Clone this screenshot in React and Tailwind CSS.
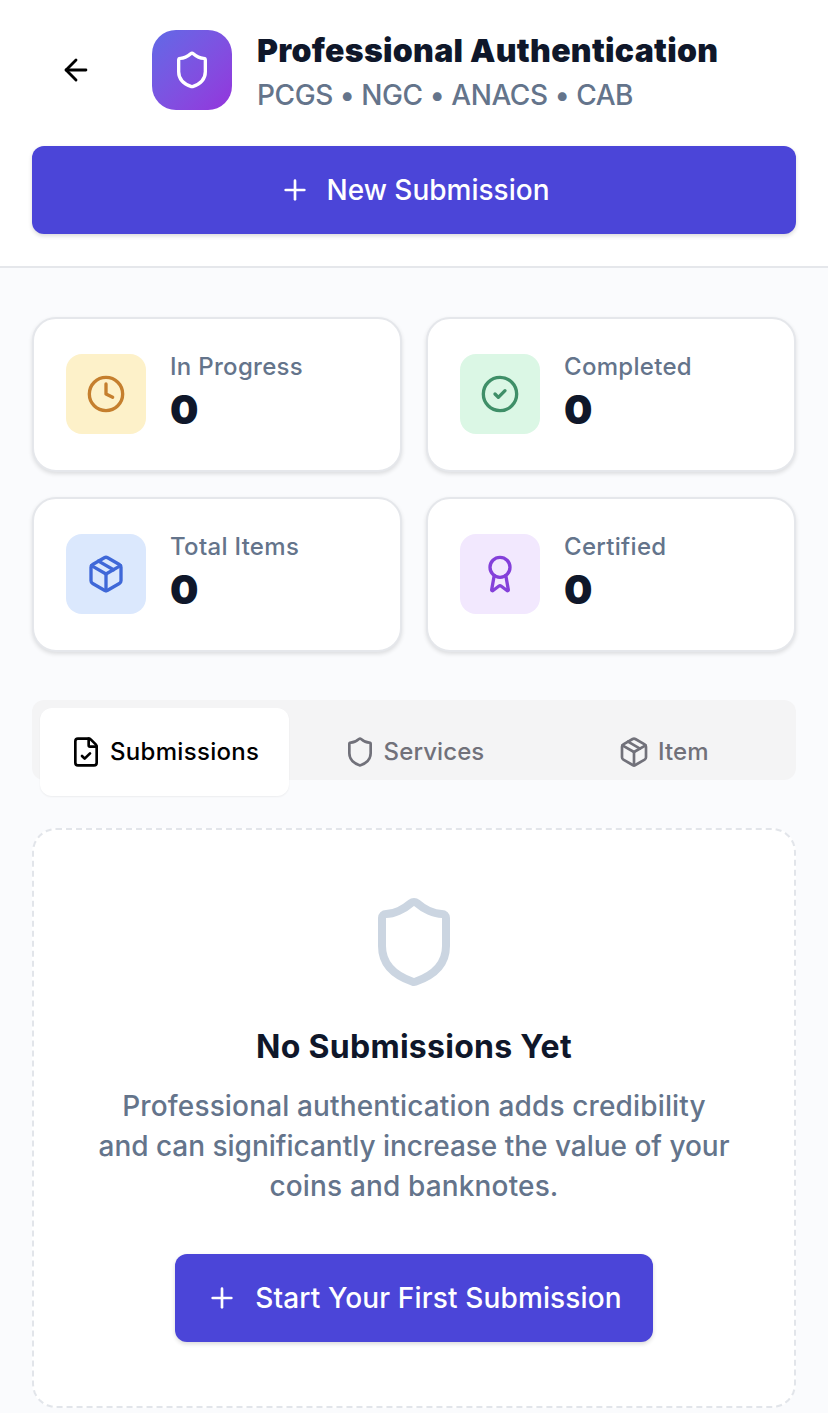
import { ArrowLeft, Shield, Plus, Clock, CircleCheck, Package, Award, FileCheck } from 'lucide-react';

const stats = [
	{ label: 'In Progress', Icon: Clock, box: 'bg-[#fdf1c9]', color: 'text-[#c57f2e]' },
	{ label: 'Completed', Icon: CircleCheck, box: 'bg-[#dbf7e5]', color: 'text-[#3f8f68]' },
	{ label: 'Total Items', Icon: Package, box: 'bg-[#dbe8fd]', color: 'text-[#3f68d8]' },
	{ label: 'Certified', Icon: Award, box: 'bg-[#f2e8fe]', color: 'text-[#8440da]' },
];

const StatCard = ({ label, Icon, box, color }) => (
	<div className="flex items-center gap-6 h-[155px] px-8 pb-[1px] bg-white border-2 border-[#e5e7eb] rounded-3xl shadow-[0_2px_4px_rgba(0,0,0,0.12)]">
		<div className={`flex items-center justify-center w-20 h-20 rounded-2xl ${box}`}>
			<Icon size={40} strokeWidth={2} className={color} />
		</div>
		<div className="mb-[6px]">
			<div className="text-2xl leading-8 font-medium tracking-[0.3px] text-[#64748b]">{label}</div>
			<div className="text-[40px] leading-[48px] mt-[3px] -mb-[2px] font-black text-[#0f172a]">0</div>
		</div>
	</div>
);

export default function App() {
	return (
		<div className="min-h-[1413px] bg-[#fafbfd] font-['Inter',sans-serif]">
			<header className="h-[268px] px-8 pt-[30px] bg-white border-b-2 border-[#e5e7eb]">
				<div className="flex items-center h-20">
					<button className="flex items-center justify-center w-20 h-20 ml-1 mr-9 text-black">
						<ArrowLeft size={34} strokeWidth={2} />
					</button>
					<div className="flex items-center justify-center w-20 h-20 rounded-3xl bg-gradient-to-br from-[#5f69e6] to-[#9333dc]">
						<Shield size={40} strokeWidth={2} className="text-white" />
					</div>
					<div className="ml-[25px] mt-[6px]">
						<div className="text-[32px] leading-10 font-black tracking-[0.3px] text-[#0f172a] whitespace-nowrap">Professional Authentication</div>
						<div className="text-[28px] leading-10 mt-[4px] font-medium tracking-[-0.43px] text-[#64748b] whitespace-nowrap">PCGS • NGC • ANACS • CAB</div>
					</div>
				</div>
				<button className="flex items-center justify-center gap-4 w-full h-[88px] mt-[36px] rounded-xl bg-[#4b45d8] text-white text-[28px] font-medium shadow-[0_2px_4px_rgba(0,0,0,0.15)]">
					<Plus size={32} strokeWidth={2} />
					New Submission
				</button>
			</header>

			<main className="px-8 pt-[49px]">
				<div className="grid grid-cols-2 gap-x-6 gap-y-[25px]">
					{stats.map((s) => (
						<StatCard key={s.label} {...s} />
					))}
				</div>

				<div className="flex h-20 mt-12 p-2 rounded-xl bg-[#f4f4f5]">
					<button className="flex flex-1 items-center justify-center gap-2 h-[88px] rounded-xl bg-white text-black text-2xl font-medium tracking-[0.3px] shadow-[0_1px_2px_rgba(0,0,0,0.06)]">
						<FileCheck size={32} strokeWidth={2} />
						Submissions
					</button>
					<button className="flex flex-1 items-center justify-center gap-2 h-[88px] text-[#71717a] text-2xl font-medium tracking-[0.1px]">
						<Shield size={32} strokeWidth={2} />
						Services
					</button>
					<button className="flex flex-1 items-center justify-center gap-2 h-[88px] text-[#71717a] text-2xl font-medium tracking-[0.1px]">
						<Package size={32} strokeWidth={2} />
						Item
					</button>
				</div>

				<div className="flex flex-col items-center h-[580px] mt-12 pt-[64px] bg-white border-2 border-dashed border-[#e2e5ea] rounded-3xl">
					<Shield size={96} strokeWidth={2} className="text-[#cbd5e1]" />
					<h3 className="mt-[37px] text-[32px] leading-10 font-bold tracking-[0.28px] text-[#0f172a]">No Submissions Yet</h3>
					<p className="mt-[19px] text-[28px] leading-10 font-medium tracking-[0.15px] text-center text-[#64748b]">
						<span className="block">Professional authentication adds credibility</span>
						<span className="block tracking-[-0.02px]">and can significantly increase the value of your</span>
						<span className="block">coins and banknotes.</span>
					</p>
					<button className="flex items-center justify-center gap-[17px] w-[478px] h-[88px] mt-12 rounded-xl bg-[#4b45d8] text-white text-[28px] font-medium tracking-[0.15px] shadow-[0_2px_4px_rgba(0,0,0,0.15)]">
						<Plus size={32} strokeWidth={2} />
						Start Your First Submission
					</button>
				</div>
			</main>
		</div>
	);
}
